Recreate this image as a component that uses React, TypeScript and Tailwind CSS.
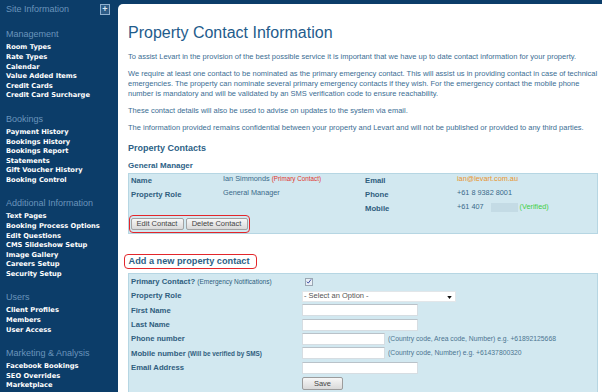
import React from 'react';

const sections = [
  {
    title: 'Management',
    items: ['Room Types', 'Rate Types', 'Calendar', 'Value Added Items', 'Credit Cards', 'Credit Card Surcharge'],
  },
  {
    title: 'Bookings',
    items: ['Payment History', 'Bookings History', 'Bookings Report', 'Statements', 'Gift Voucher History', 'Booking Control'],
  },
  {
    title: 'Additional Information',
    items: [
      'Text Pages',
      'Booking Process Options',
      'Edit Questions',
      'CMS Slideshow Setup',
      'Image Gallery',
      'Careers Setup',
      'Security Setup',
    ],
  },
  { title: 'Users', items: ['Client Profiles', 'Members', 'User Access'] },
  { title: 'Marketing & Analysis', items: ['Facebook Bookings', 'SEO Overrides', 'Marketplace'] },
];

const Sidebar = () => (
  <aside className="w-[118px] shrink-0 bg-[#0c3d69] pl-[6px] pr-[8px] font-['Liberation_Sans',Arial,sans-serif]">
    <div className="flex h-[20px] items-center justify-between">
      <span className="text-[9px] text-[#6a94bb]">Site Information</span>
      <span className="-mt-[2px] flex h-[11px] w-[10px] items-center justify-center border border-[#8fb0cf] bg-[#2e5c87] text-[9px] font-bold leading-none text-[#dce8f3]">
        +
      </span>
    </div>
    {sections.map((s, i) => (
      <div key={s.title} className={i === 0 ? 'mt-[8.3px]' : 'mt-[11.7px]'}>
        <div className="mb-[3.2px] h-[12px] text-[9px] leading-[12px] text-[#6a94bb] whitespace-nowrap">{s.title}</div>
        {s.items.map((item) => (
          <div
            key={item}
            className="font-['DejaVu_Sans',Verdana,sans-serif] text-[6.7px] font-bold leading-[9.6px] text-white whitespace-nowrap"
          >
            {item}
          </div>
        ))}
      </div>
    ))}
  </aside>
);

const Btn = ({ children, w }: { children: React.ReactNode; w: string }) => (
  <button
    className={`${w} h-[12px] rounded-[2px] border border-[#a3a3a3] bg-gradient-to-b from-[#f7f7f7] to-[#d9d9d9] text-[7.5px] leading-none text-[#444]`}
  >
    {children}
  </button>
);

const Label = ({ children }: { children?: React.ReactNode }) => (
  <div className="h-[14px] text-[7.7px] font-bold leading-[14px] text-[#2f5e7e] whitespace-nowrap">{children}</div>
);

const Value = ({ children }: { children?: React.ReactNode }) => (
  <div className="h-[14px] text-[7.3px] leading-[10px] text-[#3a6a8a] whitespace-nowrap">{children}</div>
);

const FormRow = ({ label, children }: { label: React.ReactNode; children?: React.ReactNode }) => (
  <div className="flex h-[14.33px] items-center">
    <div className="w-[171px] shrink-0 text-[7.7px] font-bold text-[#2f5e7e] whitespace-nowrap">{label}</div>
    <div className="flex items-center">{children}</div>
  </div>
);

const Input = ({ w }: { w: string }) => (
  <div className={`${w} h-[12px] border border-[#d6dde2] border-t-[#b9c2c9] bg-white`} />
);

const Hint = ({ children }: { children: React.ReactNode }) => (
  <span className="ml-[3px] text-[6.8px] text-[#4c7590] whitespace-nowrap">{children}</span>
);

export default function App() {
  return (
    <div className="flex h-[392px] w-[602px] overflow-hidden bg-[#0c3d69]">
      <Sidebar />
      <main className="mt-[4px] flex-1 rounded-tl-[5px] bg-white pl-[10px] pr-[4px] pt-[19px] font-['Liberation_Sans',Arial,sans-serif]">
        <h1 className="text-[16px] leading-[20px] text-[#1f5c8c]">Property Contact Information</h1>

        <div className="mt-[9.3px] text-[7.5px] leading-[10px] text-[#3b6e94]">
          <p className="mb-[7px]">
            To assist Levart in the provision of the best possible service it is important that we have up to date
            contact information for your property.
          </p>
          <p className="mb-[7px]">
            We require at least one contact to be nominated as the primary emergency contact. This will assist us in
            providing contact in case of technical
            <br />
            emergencies. The property can nominate several primary emergency contacts if they wish. For the emergency
            contact the mobile phone
            <br />
            number is mandatory and will be validated by an SMS verification code to ensure reachability.
          </p>
          <p className="mb-[7px]">These contact details will also be used to advise on updates to the system via email.</p>
          <p>
            The information provided remains confidential between your property and Levart and will not be published or
            provided to any third parties.
          </p>
        </div>

        <h2 className="mt-[8.4px] text-[9px] font-bold leading-[12px] text-[#2c5f86]">Property Contacts</h2>
        <h3 className="mt-[7px] text-[8px] font-bold leading-[10px] text-[#2c5f86]">General Manager</h3>

        <div className="mt-[2.6px] border border-[#b6d6e3] bg-[#d2e8f0]">
          <div className="grid grid-cols-[92px_142px_92px_1fr] pl-[2px]">
            <Label>Name</Label>
            <Value>
              Ian Simmonds <span className="text-[6.3px] text-[#e0362c]">(Primary Contact)</span>
            </Value>
            <Label>Email</Label>
            <Value>
              <span className="text-[#e8952f]">ian@levart.com.au</span>
            </Value>
            <Label>Property Role</Label>
            <Value>General Manager</Value>
            <Label>Phone</Label>
            <Value>+61 8 9382 8001</Value>
            <Label />
            <Value />
            <Label>Mobile</Label>
            <Value>
              <span className="flex items-center">
                +61 407
                <span className="ml-[7px] inline-block h-[9px] w-[27px] bg-[#c4dbe5]" />
                <span className="ml-[2px] text-[#3fcf44]">(Verified)</span>
              </span>
            </Value>
          </div>
          <div className="-mt-[1.3px] flex w-fit gap-[2px] rounded-[4px] border-[1.5px] border-[#e3262b] py-[2px] pl-[0.5px] pr-[1.5px]">
            <Btn w="w-[53px]">Edit Contact</Btn>
            <Btn w="w-[62px]">Delete Contact</Btn>
          </div>
        </div>

        <div className="-ml-[4px] mt-[20px] h-[15px] w-fit rounded-[4px] border-[1.5px] border-[#e3262b] pl-[3.5px] pr-[6px] text-[9.2px] font-bold leading-[12px] text-[#2c5f86]">
          Add a new property contact
        </div>

        <div className="mt-[4.3px] border border-[#b6d6e3] bg-[#d2e8f0] pl-[2px] pt-[0.3px] pb-[4px]">
          <FormRow
            label={
              <>
                Primary Contact? <span className="text-[6.5px] font-normal">(Emergency Notifications)</span>
              </>
            }
          >
            <div className="ml-[3px] flex h-[8px] w-[8px] items-center justify-center border border-[#9aa7b3] bg-[#e8eef5]">
              <svg viewBox="0 0 8 8" className="h-[7px] w-[7px]">
                <path d="M1.2 4.2 L3 6.2 L6.8 1.2" fill="none" stroke="#2b3f9a" strokeWidth="1.2" />
              </svg>
            </div>
          </FormRow>
          <FormRow label="Property Role">
            <div className="flex h-[11px] w-[154px] items-center justify-between border border-[#e2e6e9] bg-white pl-[1px] pr-[3px]">
              <span className="text-[7.5px] text-[#555]">- Select an Option -</span>
              <svg viewBox="0 0 6 4" className="mt-[2px] h-[3px] w-[5px]">
                <path d="M0 0 H6 L3 4 Z" fill="#111" />
              </svg>
            </div>
          </FormRow>
          <FormRow label="First Name">
            <Input w="w-[116px]" />
          </FormRow>
          <FormRow label="Last Name">
            <Input w="w-[116px]" />
          </FormRow>
          <FormRow label="Phone number">
            <Input w="w-[83px]" />
            <Hint>(Country code, Area code, Number) e.g. +61892125668</Hint>
          </FormRow>
          <FormRow
            label={
              <>
                Mobile number <span className="text-[6.4px]">(Will be verified by SMS)</span>
              </>
            }
          >
            <Input w="w-[83px]" />
            <Hint>(Country code, Number) e.g. +61437800320</Hint>
          </FormRow>
          <FormRow label="Email Address">
            <Input w="w-[116px]" />
          </FormRow>
          <FormRow label="">
            <div className="mt-[3px] flex h-[13px] w-[41px] items-center justify-center rounded-[2px] border border-[#9c9c9c] bg-gradient-to-b from-[#f7f7f7] to-[#d9d9d9] text-[7.5px] text-[#444]">
              Save
            </div>
          </FormRow>
        </div>
      </main>
    </div>
  );
}
